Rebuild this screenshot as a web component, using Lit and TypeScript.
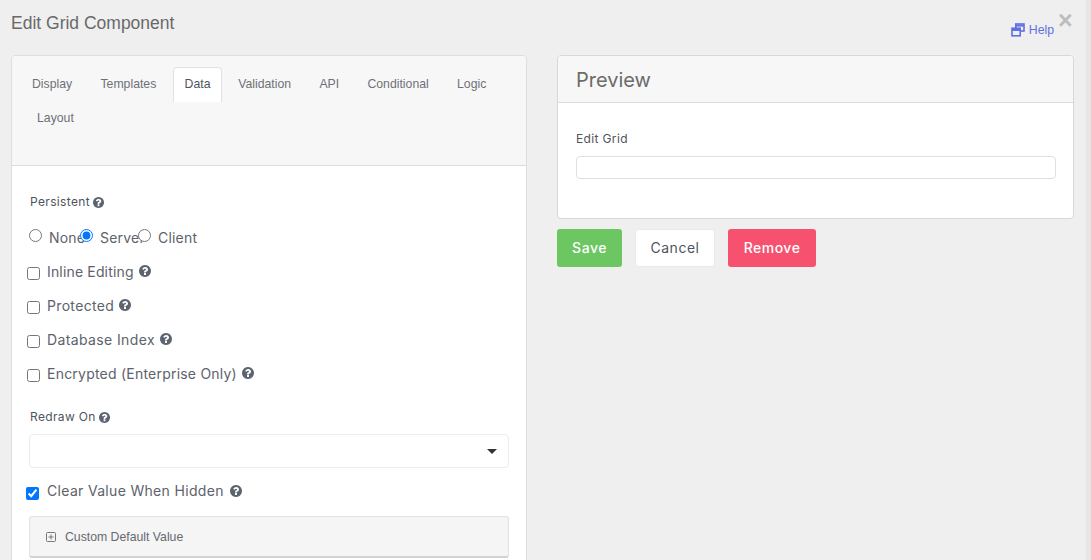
import { LitElement, html, css, svg } from "lit";
import { customElement } from "lit/decorators.js";

const Q = svg`<path fill-rule="evenodd" d="M1024 1376v-192q0-14-9-23t-23-9h-192q-14 0-23 9t-9 23v192q0 14 9 23t23 9h192q14 0 23-9t9-23zm256-672q0-88-55.5-163t-138.5-116-170-41q-243 0-371 213-15 24 8 42l132 100q7 6 19 6 16 0 25-12 53-68 86-92 34-24 86-24 48 0 85.5 26t37.5 59q0 38-20 61t-68 45q-63 28-115.5 86.5t-52.5 125.5v36q0 14 9 23t23 9h192q14 0 23-9t9-23q0-19 21.5-49.5t54.5-49.5q32-18 49-28.5t46-35 44.5-48 28-60.5 12.5-81zm384 192q0 209-103 385.5t-279.5 279.5-385.5 103-385.5-103-279.5-279.5-103-385.5 103-385.5 279.5-279.5 385.5-103 385.5 103 279.5 279.5 103 385.5z"/>`;
const q = () => html`<svg class="q" viewBox="128 128 1536 1536" fill="currentColor">${Q}</svg>`;

@customElement("app-root")
export class AppRoot extends LitElement {
  static styles = css`
    :host { display: block; width: 1091px; height: 560px; overflow: hidden; background: #efefef; font-family: Inter, "Liberation Sans", sans-serif; color: #555b66; position: relative; }
    * { box-sizing: border-box; }
    .scroll { position: absolute; right: 0; top: 0; bottom: 0; width: 5px; background: #e6e6e6; }
    .top { display: flex; height: 55px; padding: 13px 0 0 11px; font-family: "Liberation Sans", sans-serif; }
    .title { font-size: 17.5px; line-height: 21px; color: #696969; flex: 1; }
    .help { display: flex; align-items: center; gap: 4px; height: 16px; margin-top: 9px; font-size: 12.25px; color: #5f71e4; }
    .help svg { width: 14px; height: 14px; }
    .close { width: 37px; padding-left: 4px; font-size: 25px; line-height: 14px; font-weight: 700; color: #bdbdbd; }
    .cols { display: flex; align-items: flex-start; padding-left: 11px; }
    .left { width: 516px; height: 600px; margin-right: 30px; background: #fff; border: 1px solid #dedede; border-radius: 4px; flex: none; }
    .right { width: 517px; flex: none; }
    .lhead { height: 110px; background: #f7f7f7; border-bottom: 1px solid #dcdcdc; border-radius: 4px 4px 0 0; padding: 11px 0 0 8px; display: flex; flex-wrap: wrap; align-content: flex-start; column-gap: 4.3px; font-family: "Liberation Sans", sans-serif; font-size: 12.25px; }
    .tab { height: 35px; padding: 0 11px; border: 1px solid transparent; border-bottom: 0; line-height: 33px; color: #6e7178; white-space: nowrap; }
    .tab.active { padding: 0 10.4px 0 11px; background: #fff; border-color: #e2e2e2; border-radius: 4px 4px 0 0; color: #50555c; }
    .tab.second { margin-left: 5px; height: 33px; line-height: 31px; }
    .body { padding: 27px 17px 0 17px; }
    .lab { font-size: 12px; line-height: 18px; display: flex; align-items: center; gap: 3px; color: #50555c; padding-left: 1px; letter-spacing: 0.35px; }
    .q { width: 11px; height: 11px; color: #5c6470; flex: none; }
    .radios { display: flex; height: 20px; margin-top: 18px; }
    .radio { display: flex; flex: none; position: relative; }
    .radio input { margin: 0; width: 13px; height: 13px; position: relative; z-index: 1; background: #fff; flex: none; }
    .radio span { font-size: 14px; line-height: 18px; margin: 0 0 0 7px; white-space: nowrap; color: #5d626b; letter-spacing: 0.2px; }
    .r1 { width: 51px; } .r2 { width: 58px; }
    .check { display: flex; align-items: center; height: 20px; margin: 0 0 14px -2px; font-size: 14px; color: #5d626b; gap: 7px; }
    .check input { margin: 2px 0 0 0; width: 13px; height: 13px; flex: none; }
    .check span { margin-bottom: 2px; }
    .check .q { width: 12px; height: 12px; margin: 0 0 2px -2px; }
    .checks { margin-top: 13px; }
    .redraw { margin-top: 24px; }
    .select { height: 34px; margin-top: 8px; border: 1px solid #ececec; border-radius: 4px; display: flex; align-items: center; justify-content: flex-end; padding-right: 11px; }
    .caret { width: 0; height: 0; border-left: 5.5px solid transparent; border-right: 5.5px solid transparent; border-top: 5px solid #333; margin-top: 1px; }
    .clear { margin: 14px 0 14px -3px; gap: 8px; }
    .clear span { margin-bottom: 3px; }
    .accord { height: 42px; background: #f5f5f6; border: 1px solid #e2e2e4; border-bottom: 2px solid #d2d2d6; border-radius: 3px; display: flex; align-items: center; gap: 9px; padding: 1px 0 0 16px; font-family: "Liberation Sans", sans-serif; font-size: 12.25px; color: #666a70; }
    .accord svg { width: 10px; height: 10px; }
    .prev { height: 164px; background: #fff; border: 1px solid #d8d8d8; border-radius: 4px; }
    .phead { height: 47px; background: #f7f7f7; border-bottom: 1px solid #dcdcdc; border-radius: 4px 4px 0 0; padding: 0 18px; font-size: 20px; line-height: 48px; color: #6b6b6b; }
    .pbody { padding: 27px 17px 0 18px; }
    .pbody .lab { padding-left: 0; }
    .input { height: 23px; margin-top: 8px; border: 1px solid #dfdfdf; border-radius: 4px; }
    .btns { display: flex; align-items: center; margin-top: 10px; }
    .btn { display: flex; align-items: center; justify-content: center; height: 38px; padding-bottom: 2px; border-radius: 3px; font-size: 14px; font-weight: 500; letter-spacing: 0.5px; color: #fff; flex: none; }
    .save { width: 65px; background: #6cc662; margin-right: 13px; }
    .cancel { width: 80px; background: #fff; border: 1px solid #eaeaea; color: #50555c; font-weight: 400; margin-right: 13px; }
    .remove { width: 88px; background: #f6526f; }
  `;

  render() {
    const tabs = ["Display", "Templates", "Data", "Validation", "API", "Conditional", "Logic"];
    const checks = [
      { text: "Inline Editing", ls: 0.16 },
      { text: "Protected", ls: 0.33 },
      { text: "Database Index", ls: 0.38 },
      { text: "Encrypted (Enterprise Only)", ls: 0.22 },
    ];
    return html`
      <div class="scroll"></div>
      <div class="top">
        <div class="title">Edit Grid Component</div>
        <div class="help">
          <svg viewBox="0 0 14 14" fill="none" stroke="currentColor" stroke-width="1.6">
            <rect x="4.8" y="1" width="8.2" height="7" fill="#efefef"/><path d="M4.8 2.6h8.2" stroke-width="2"/>
            <rect x="1" y="5.2" width="8.2" height="7.6" fill="#efefef"/><path d="M1 7h8.2" stroke-width="2"/>
          </svg>
          Help
        </div>
        <div class="close">×</div>
      </div>
      <div class="cols">
        <div class="left">
          <div class="lhead">
            ${tabs.map((t) => html`<div class="tab ${t === "Data" ? "active" : ""}">${t}</div>`)}
            <div class="tab second">Layout</div>
          </div>
          <div class="body">
            <div class="lab">Persistent ${q()}</div>
            <div class="radios">
              <label class="radio r1"><input type="radio" name="p" /><span>None</span></label>
              <label class="radio r2"><input type="radio" name="p" checked /><span>Server</span></label>
              <label class="radio"><input type="radio" name="p" /><span>Client</span></label>
            </div>
            <div class="checks">
              ${checks.map((c) => html`<label class="check"><input type="checkbox" /><span style="letter-spacing:${c.ls}px">${c.text}</span>${q()}</label>`)}
            </div>
            <div class="lab redraw">Redraw On ${q()}</div>
            <div class="select"><div class="caret"></div></div>
            <label class="check clear"><input type="checkbox" checked /><span style="letter-spacing:0.32px">Clear Value When Hidden</span>${q()}</label>
            <div class="accord">
              <svg viewBox="0 0 10 10" fill="none" stroke="#777" stroke-width="1"><rect x=".5" y=".5" width="9" height="9" rx="1"/><path d="M2.5 5h5M5 2.5v5"/></svg>
              Custom Default Value
            </div>
          </div>
        </div>
        <div class="right">
          <div class="prev">
            <div class="phead">Preview</div>
            <div class="pbody">
              <div class="lab">Edit Grid</div>
              <div class="input"></div>
            </div>
          </div>
          <div class="btns">
            <div class="btn save">Save</div>
            <div class="btn cancel">Cancel</div>
            <div class="btn remove">Remove</div>
          </div>
        </div>
      </div>
    `;
  }
}
